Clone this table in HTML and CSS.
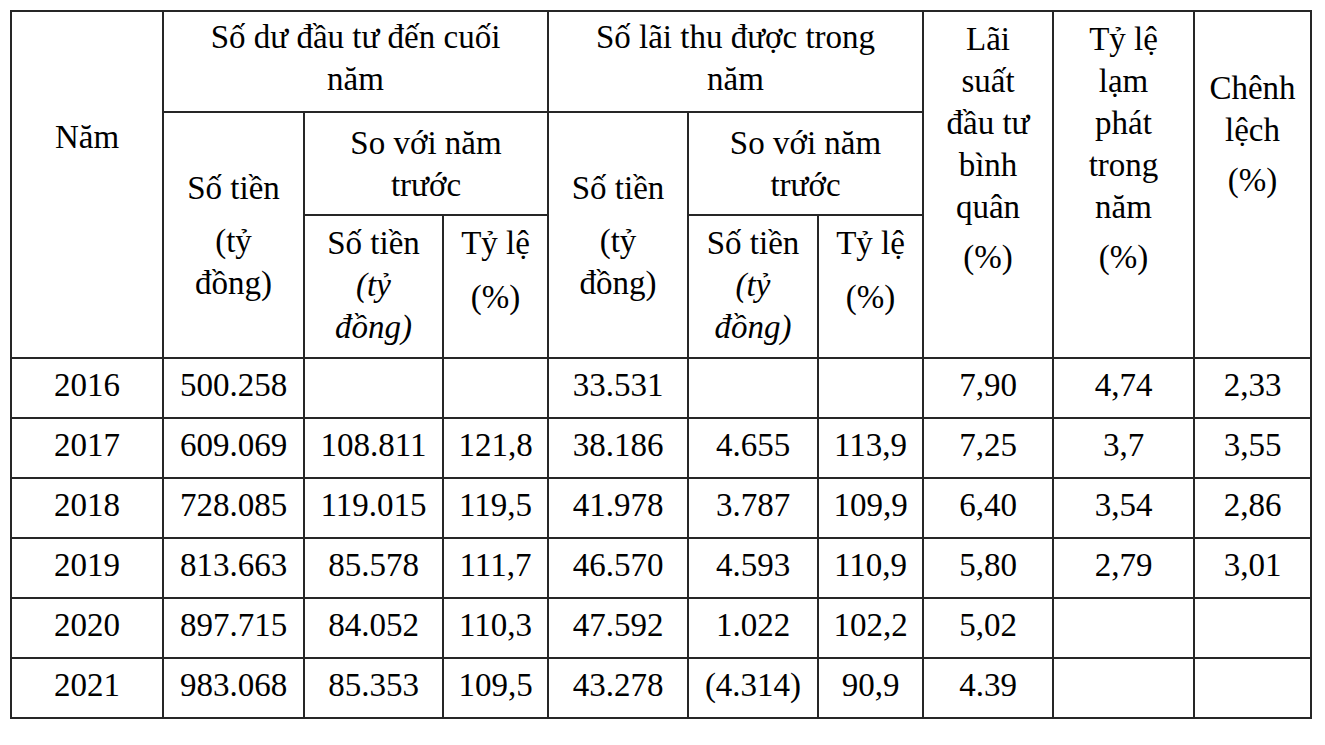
FILE: index.html
```html
<!DOCTYPE html>
<html lang="vi">
<head>
<meta charset="utf-8">
<title>Bảng số liệu</title>
<link rel="stylesheet" href="styles.css">
</head>
<body>
<table class="data">
  <colgroup>
    <col class="c1"><col class="c2"><col class="c3"><col class="c4"><col class="c5">
    <col class="c6"><col class="c7"><col class="c8"><col class="c9"><col class="c10">
  </colgroup>
  <thead>
    <tr class="h1">
      <th rowspan="3" class="top nam">Năm</th>
      <th colspan="3" class="mid grp">Số dư đầu tư đến cuối<br>năm</th>
      <th colspan="3" class="mid grp">Số lãi thu được trong<br>năm</th>
      <th rowspan="3" class="top tall">Lãi<br>suất<br>đầu tư<br>bình<br>quân<div class="gap8">(%)</div></th>
      <th rowspan="3" class="top tall">Tỷ lệ<br>lạm<br>phát<br>trong<br>năm<div class="gap8">(%)</div></th>
      <th rowspan="3" class="top chenh">Chênh<br>lệch<div class="gap8">(%)</div></th>
    </tr>
    <tr class="h2">
      <th rowspan="2" class="mid">Số tiền<div class="gap11">(tỷ<br>đồng)</div></th>
      <th colspan="2" class="mid">So với năm<br>trước</th>
      <th rowspan="2" class="mid">Số tiền<div class="gap11">(tỷ<br>đồng)</div></th>
      <th colspan="2" class="mid">So với năm<br>trước</th>
    </tr>
    <tr class="h3">
      <th class="top sub">Số tiền<br><i>(tỷ<br>đồng)</i></th>
      <th class="top sub">Tỷ lệ<div class="gap12">(%)</div></th>
      <th class="top sub">Số tiền<br><i>(tỷ<br>đồng)</i></th>
      <th class="top sub">Tỷ lệ<div class="gap12">(%)</div></th>
    </tr>
  </thead>
  <tbody>
    <tr><td>2016</td><td>500.258</td><td></td><td></td><td>33.531</td><td></td><td></td><td>7,90</td><td>4,74</td><td>2,33</td></tr>
    <tr><td>2017</td><td>609.069</td><td>108.811</td><td>121,8</td><td>38.186</td><td>4.655</td><td>113,9</td><td>7,25</td><td>3,7</td><td>3,55</td></tr>
    <tr><td>2018</td><td>728.085</td><td>119.015</td><td>119,5</td><td>41.978</td><td>3.787</td><td>109,9</td><td>6,40</td><td>3,54</td><td>2,86</td></tr>
    <tr><td>2019</td><td>813.663</td><td>85.578</td><td>111,7</td><td>46.570</td><td>4.593</td><td>110,9</td><td>5,80</td><td>2,79</td><td>3,01</td></tr>
    <tr><td>2020</td><td>897.715</td><td>84.052</td><td>110,3</td><td>47.592</td><td>1.022</td><td>102,2</td><td>5,02</td><td></td><td></td></tr>
    <tr><td>2021</td><td>983.068</td><td>85.353</td><td>109,5</td><td>43.278</td><td>(4.314)</td><td>90,9</td><td>4.39</td><td></td><td></td></tr>
  </tbody>
</table>
</body>
</html>
```
FILE: styles.css
```css
html, body {
  margin: 0;
  padding: 0;
  background: #ffffff;
}
body {
  padding: 10px 0 0 10px;
  font-family: "Liberation Serif", "Times New Roman", serif;
  color: #000;
}
.data {
  border-collapse: collapse;
  table-layout: fixed;
  width: 1300px;
  font-size: 33px;
  line-height: 42px;
}
.c1 { width: 152px; }
.c2 { width: 141px; }
.c3 { width: 139px; }
.c4 { width: 105px; }
.c5 { width: 140px; }
.c6 { width: 130px; }
.c7 { width: 105px; }
.c8 { width: 130px; }
.c9 { width: 141px; }
.c10 { width: 117px; }

.data th, .data td {
  border: 2px solid #262626;
  padding: 0;
  text-align: center;
  font-weight: normal;
}
.data th { vertical-align: middle; }
.data th.top { vertical-align: top; }
.data th.mid { vertical-align: middle; }

.h1 { height: 101px; }
.h2 { height: 103px; }
.h3 { height: 143px; }

.data th.grp { padding-bottom: 7px; }
.data th.nam { padding-top: 104px; }
.data th.tall { padding-top: 6px; }
.data th.chenh { padding-top: 55px; }
.data th.sub { padding-top: 6px; }

.gap8 { margin-top: 8px; }
.gap11 { margin-top: 11px; }
.gap12 { margin-top: 12px; }

.data tbody tr { height: 60px; }
.data td {
  vertical-align: middle;
  padding-bottom: 6px;
}
```
